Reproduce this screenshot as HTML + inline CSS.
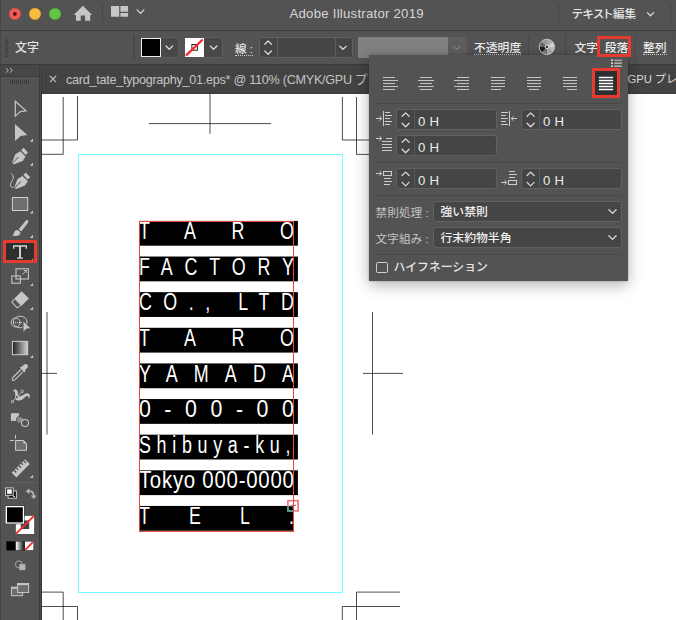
<!DOCTYPE html>
<html lang="ja">
<head>
<meta charset="utf-8">
<title>Adobe Illustrator 2019</title>
<style>
*{margin:0;padding:0;box-sizing:border-box}
html,body{width:676px;height:620px;overflow:hidden;background:#fff}
body{position:relative;font-family:"Liberation Sans","Noto Sans CJK JP",sans-serif;color:#dcdcdc;-webkit-font-smoothing:antialiased}
.abs{position:absolute}
.t{position:absolute;white-space:nowrap;line-height:1}
#titlebar{left:0;top:0;width:676px;height:31px;background:#535353;border-bottom:1px solid #3a3a3a;border-left:1px solid #464646}
#ctrl{left:0;top:31px;width:676px;height:32.5px;background:#535353;border-left:1px solid #464646}
#tabbar{left:0;top:63.5px;width:676px;height:30.5px;background:#3a3a3a}
#tab{left:41.7px;top:64.8px;width:635px;height:27.8px;background:#434343}
#tools{left:0;top:64.8px;width:42px;height:556px;background:#535353;border-left:1px solid #444;border-right:3px solid #3a3a3a}
#toolhead{left:1px;top:64.8px;width:38.2px;height:12.2px;background:#474747;border-bottom:1px solid #3c3c3c}
.fld{position:absolute;background:#454545;border:1px solid #616161;border-radius:3px}
.sep{position:absolute;height:1px;background:#494949}
.vsep{position:absolute;width:1px;background:#474747}
.ul{border-bottom:1px dotted #cfcfcf}
#panel{left:369px;top:55px;width:259px;height:226px;background:#535353;box-shadow:0 4px 14px rgba(0,0,0,.3),0 0 2px rgba(0,0,0,.25)}
.lab{color:#c4c4c4;font-size:11.7px}
.val{color:#f0f0f0;font-size:11.85px;font-weight:500}
.num{color:#ececec;font-size:13.2px;letter-spacing:.2px}
</style>
</head>
<body>
<!-- canvas art -->
<svg class="abs" style="left:0;top:0" width="676" height="620" viewBox="0 0 676 620">
  <g fill="none" stroke="#000" stroke-width=".7">
    <!-- top-left crop -->
    <path d="M63.2 97V154.300H42M77.500 96V140H42"/>
    <!-- top centre -->
    <path d="M149 123.600H271M210 93V133.800"/>
    <!-- top-right crop -->
    <path d="M342.400 97V140H400M356.500 97V154.400H400"/>
    <!-- left centre -->
    <path d="M47 312V434.500M42 373.400H57"/>
    <!-- right centre -->
    <path d="M372.500 312V434.500M363 373.400H403"/>
    <!-- bottom-left crop -->
    <path d="M42 592.100H63.200V620M42 606.500H77.500V620"/>
    <!-- bottom-right crop -->
    <path d="M400 592.100H356.500V620M400 606.500H342.300V620"/>
  </g>
  <rect x="78.500" y="154.500" width="264" height="438" fill="none" stroke="#7ff" stroke-width="1" shape-rendering="crispEdges"/>
  <!-- black bands -->
  <g fill="#000">
    <rect x="139" y="220.90" width="158.9" height="24.800"/>
    <rect x="139" y="256.53" width="158.9" height="24.800"/>
    <rect x="139" y="292.16" width="158.9" height="24.800"/>
    <rect x="139" y="327.79" width="158.9" height="24.800"/>
    <rect x="139" y="363.42" width="158.9" height="24.800"/>
    <rect x="139" y="399.05" width="158.9" height="24.800"/>
    <rect x="139" y="434.68" width="158.9" height="24.800"/>
    <rect x="139" y="470.31" width="158.9" height="24.800"/>
    <rect x="139" y="505.94" width="154.0" height="24.800"/>
  </g>
  <g font-family="'Liberation Sans',sans-serif" font-size="23.200" fill="#fff">
    <text transform="translate(138.900 239.00) scale(0.77 1)" textLength="201.3" lengthAdjust="spacing">TARO</text>
    <text transform="translate(138.900 274.63) scale(0.77 1)" textLength="201.3" lengthAdjust="spacing">FACTORY</text>
    <text transform="translate(138.900 310.26) scale(0.77 1)" textLength="201.3" lengthAdjust="spacing">CO., LTD</text>
    <text transform="translate(138.900 345.89) scale(0.77 1)" textLength="201.3" lengthAdjust="spacing">TARO</text>
    <text transform="translate(138.900 381.52) scale(0.77 1)" textLength="201.3" lengthAdjust="spacing">YAMADA</text>
    <text transform="translate(138.900 417.15) scale(0.92 1)" textLength="168.5" lengthAdjust="spacing">0-00-00</text>
    <text transform="translate(138.900 452.78) scale(0.77 1)" textLength="196.8" lengthAdjust="spacing">Shibuya-ku,</text>
    <text transform="translate(138.900 488.41) scale(0.88 1)" textLength="176.1" lengthAdjust="spacing">Tokyo 000-0000</text>
    <text transform="translate(138.900 524.04) scale(0.77 1)" textLength="201.3" lengthAdjust="spacing">TEL.</text>
  </g>
  <rect x="139.500" y="221.500" width="154" height="310" fill="none" stroke="#e8453c" stroke-width="1" shape-rendering="crispEdges"/>
  <rect x="287.900" y="500.700" width="10.200" height="10.200" fill="none" stroke="#ee7a85" stroke-width="1.700"/>
  <path d="M287.900 506V510.900H293" fill="none" stroke="#3fa393" stroke-width="1.700"/>
  <path d="M290.200 506.400H293V509" fill="none" stroke="#2f8f80" stroke-width=".9"/>
  <path d="M290.500 505.300H296M293.500 502.800V507.800" fill="none" stroke="#ea4a55" stroke-width="1"/>
  <path d="M293.500 494V532" fill="none" stroke="#e8453c" stroke-width="1" shape-rendering="crispEdges"/>
</svg>

<!-- title bar -->
<div id="titlebar" class="abs"></div>
<div id="ctrl" class="abs"></div>
<div id="tabbar" class="abs"></div>
<div id="tab" class="abs"></div>
<div id="tools" class="abs"></div>
<div id="toolhead" class="abs"></div>
<div class="abs" style="left:40.3px;top:64.8px;width:1px;height:556px;background:#484848"></div>

<div class="t" style="left:289.5px;top:7px;font-size:13.2px;letter-spacing:.24px;color:#d6d6d6">Adobe Illustrator 2019</div>
<div class="t" style="left:572px;top:8px;font-size:11.7px;font-feature-settings:'palt';color:#e4e4e4;font-weight:500">テキスト編集</div>
<div class="t" style="left:15px;top:42px;font-size:12px;color:#e0e0e0;font-weight:500">文字</div>
<div class="t ul" style="left:235px;top:42.5px;font-size:11.6px;color:#e2e2e2;padding-bottom:1px;font-weight:500">線 :</div>
<div class="t ul" style="left:474px;top:42.500px;font-size:11.8px;color:#ededed;font-weight:500">不透明度</div>
<div class="t" style="left:574.500px;top:42.500px;font-size:11.8px;color:#ededed;font-weight:500">文字</div>
<div class="t ul" style="left:604.800px;top:42.500px;font-size:11.8px;color:#f4f4f4;font-weight:500">段落</div>
<div class="t ul" style="left:643px;top:42.500px;font-size:11.8px;color:#ededed;font-weight:500">整列</div>
<div class="t" style="left:66px;top:74px;font-size:12.6px;letter-spacing:-.26px;color:#c4c4c4">card_tate_typography_01.eps* @ 110% (CMYK/GPU プレ</div>
<div class="t" style="left:627.600px;top:74.400px;font-size:11.300px;letter-spacing:-.1px;color:#dcdcdc">GPU プレ</div>

<!-- control bar widgets -->
<div class="abs" style="left:5px;top:38px;width:3px;height:20px;background:repeating-linear-gradient(#3e3e3e 0 1px,transparent 1px 2px)"></div>
<div class="vsep" style="left:101.500px;top:3px;height:20px;width:1.5px;background:#464646"></div>
<div class="vsep" style="left:557.500px;top:3.500px;height:19px;width:1.5px;background:#474747"></div>
<div class="vsep" style="left:669.500px;top:3.500px;height:19px;width:1.5px;background:#474747"></div>
<div class="vsep" style="left:133px;top:35px;height:24px;width:1.5px;background:#484848"></div>
<div class="vsep" style="left:527.500px;top:35px;height:24.500px;background:#484848"></div>
<div class="vsep" style="left:565.300px;top:35px;height:24.500px;background:#484848"></div>
<div class="vsep" style="left:634.600px;top:35px;height:24.500px;background:#484848"></div>
<div class="vsep" style="left:673px;top:35px;height:24.500px;background:#484848"></div>

<div class="fld" style="left:158px;top:37px;width:20.500px;height:20.500px;background:#484848;border-color:#5e5e5e;border-radius:0 3px 3px 0"></div>
<div class="abs" style="left:140.500px;top:38px;width:20px;height:19px;background:#000;border:1px solid #ececec"></div>
<div class="fld" style="left:202px;top:37px;width:20.500px;height:20.500px;background:#484848;border-color:#5e5e5e;border-radius:0 3px 3px 0"></div>
<div class="abs" style="left:185px;top:38px;width:19px;height:19px;background:#fff"></div>
<div class="fld" style="left:259px;top:37px;width:94px;height:21px"></div>
<div class="vsep" style="left:277px;top:38px;height:19px;background:#5e5e5e"></div>
<div class="vsep" style="left:335px;top:38px;height:19px;background:#5e5e5e"></div>
<div class="abs" style="left:358px;top:37px;width:90px;height:21px;background:#808080;border-radius:1px 0 0 1px"></div>
<div class="abs" style="left:448px;top:37px;width:18.500px;height:21px;background:#5e5e5e;border-radius:0 3px 3px 0"></div>

<!-- red highlight on 段落 -->

<!-- popup panel -->
<div id="panel" class="abs"></div>
<div class="abs" style="left:597.200px;top:36.200px;width:33.800px;height:20.400px;border:3px solid #e63b30"></div>
<div class="sep" style="left:375px;top:103px;width:247px"></div>
<div class="sep" style="left:375px;top:162px;width:247px"></div>
<div class="sep" style="left:375px;top:195px;width:247px"></div>
<div class="sep" style="left:375px;top:254px;width:247px"></div>

<div class="fld" style="left:396px;top:109px;width:101px;height:21px"></div>
<div class="fld" style="left:521px;top:109px;width:101px;height:21px"></div>
<div class="fld" style="left:396px;top:135px;width:101px;height:21px"></div>
<div class="fld" style="left:396px;top:168px;width:101px;height:21px"></div>
<div class="fld" style="left:521px;top:168px;width:101px;height:21px"></div>
<div class="vsep" style="left:414px;top:110px;height:19px;background:#5a5a5a"></div>
<div class="vsep" style="left:539px;top:110px;height:19px;background:#5a5a5a"></div>
<div class="vsep" style="left:414px;top:136px;height:19px;background:#5a5a5a"></div>
<div class="vsep" style="left:414px;top:169px;height:19px;background:#5a5a5a"></div>
<div class="vsep" style="left:539px;top:169px;height:19px;background:#5a5a5a"></div>
<div class="t num" style="left:418px;top:114.7px">0 H</div>
<div class="t num" style="left:543px;top:114.7px">0 H</div>
<div class="t num" style="left:418px;top:140.7px">0 H</div>
<div class="t num" style="left:418px;top:173.7px">0 H</div>
<div class="t num" style="left:543px;top:173.7px">0 H</div>

<div class="fld" style="left:433px;top:201px;width:189px;height:21px"></div>
<div class="fld" style="left:433px;top:227px;width:189px;height:21px"></div>
<div class="t lab" style="left:375.5px;top:206.5px">禁則処理 :</div>
<div class="t lab" style="left:375.5px;top:232.5px">文字組み :</div>
<div class="t val" style="left:440.5px;top:206.5px">強い禁則</div>
<div class="t val" style="left:440.5px;top:232.5px">行末約物半角</div>
<div class="abs" style="left:376px;top:261.5px;width:11.5px;height:11.5px;border:1px solid #cfcfcf;border-radius:1.5px"></div>
<div class="t val" style="left:393.600px;top:261.500px;color:#e6e6e6">ハイフネーション</div>

<!-- justify-all selected -->
<div class="abs" style="left:592px;top:68px;width:28.100px;height:29.900px;background:#2d3030;border:3.300px solid #e63b30"></div>
<!-- type tool selected -->
<div class="abs" style="left:2.900px;top:240px;width:34.100px;height:23px;background:#2d2f2f;border:3px solid #e63b30"></div>

<!-- icons -->
<svg class="abs" style="left:0;top:0" width="676" height="620" viewBox="0 0 676 620" id="icons">
<!--ICONS-START-->
  <!-- traffic lights -->
  <circle cx="14.900" cy="13.900" r="5.700" fill="#ee5d58" stroke="#dc4640" stroke-width=".6"/><circle cx="14.900" cy="13.900" r="1.900" fill="#4c0b0b"/>
  <circle cx="35" cy="13.900" r="5.700" fill="#f6bc3c" stroke="#e0a42e" stroke-width=".6"/>
  <circle cx="55" cy="13.900" r="5.700" fill="#60c648" stroke="#4cae36" stroke-width=".6"/>
  <!-- home -->
  <path d="M82.900 5.700L73.700 14.900H76V20.800H80.700V15.600H85.100V20.800H90.200V14.900H92.100Z" fill="#c6c6c6"/>
  <!-- layout -->
  <path d="M111 6h8.200v10.800H111zM120.400 6H128.100v5.700h-7.700zM120.400 12.900H128.100V16.800h-7.700z" fill="#c6c6c6"/>
  <g fill="none" stroke="#d8d8d8" stroke-width="1.3" stroke-linecap="round" stroke-linejoin="round">
    <path d="M137.100 9.900l3.400 3.500 3.400-3.500"/>
    <path d="M647.4 12.6l3.100 3.200 3.100-3.200"/>
    <!-- control bar chevrons -->
    <path d="M166 46l3.300 3.300 3.300-3.300"/>
    <path d="M210.300 46l3.300 3.300 3.300-3.300"/>
    <path d="M339.8 46.2l3.2 3 3.2-3"/>
    <path d="M264.800 44.300l3.300-3.300 3.300 3.300M264.800 51l3.300 3.300 3.300-3.300"/>
    <!-- panel steppers -->
    <path d="M402.1 116.3l3.500-3.400 3.500 3.400M402.1 123.2l3.500 3.500 3.500-3.500"/>
    <path d="M527.1 116.3l3.500-3.400 3.500 3.400M527.1 123.2l3.500 3.500 3.500-3.500"/>
    <path d="M402.1 142.3l3.500-3.400 3.500 3.400M402.1 149.2l3.500 3.500 3.500-3.500"/>
    <path d="M402.1 175.5l3.500-3.400 3.500 3.400M402.1 182.4l3.500 3.500 3.500-3.500"/>
    <path d="M527.1 175.5l3.500-3.400 3.500 3.400M527.1 182.4l3.500 3.500 3.500-3.500"/>
    <path d="M608.9 209.8l3.6 3.6 3.6-3.6"/>
    <path d="M608.9 235.8l3.6 3.6 3.6-3.6"/>
  </g>
  <path d="M453.500 46.200l3.300 3.200 3.300-3.200" fill="none" stroke="#7c7c7c" stroke-width="1.3" stroke-linecap="round" stroke-linejoin="round"/>
  <!-- stroke swatch none -->
  <rect x="191.900" y="44.500" width="5.500" height="5.700" fill="none" stroke="#1c1c1c" stroke-width="1"/>
  <path d="M185.900 55.600L202.700 39.500" stroke="#ee2a2e" stroke-width="2.200" fill="none"/>
  <!-- globe/recolor -->
  <path d="M546.9 46.9L546.90 39.30A7.6 7.6 0 0 1 552.27 41.53Z" fill="#a8a8a8"/>
  <path d="M546.9 46.9L552.27 41.53A7.6 7.6 0 0 1 554.50 46.90Z" fill="#d2d2d2"/>
  <path d="M546.9 46.9L554.50 46.90A7.6 7.6 0 0 1 552.27 52.27Z" fill="#b6b6b6"/>
  <path d="M546.9 46.9L552.27 52.27A7.6 7.6 0 0 1 546.90 54.50Z" fill="#a2a2a2"/>
  <path d="M546.9 46.9L546.90 54.50A7.6 7.6 0 0 1 541.53 52.27Z" fill="#707070"/>
  <path d="M546.9 46.9L541.53 52.27A7.6 7.6 0 0 1 539.30 46.90Z" fill="#1c1c1c"/>
  <path d="M546.9 46.9L539.30 46.90A7.6 7.6 0 0 1 541.53 41.53Z" fill="#666"/>
  <path d="M546.9 46.9L541.53 41.53A7.6 7.6 0 0 1 546.90 39.30Z" fill="#989898"/>
  <circle cx="546.9" cy="46.9" r="7.700" fill="none" stroke="#c4c4c4" stroke-width=".9"/>
  <circle cx="546.9" cy="46.9" r="1.800" fill="#3a3a3a" stroke="#e0e0e0" stroke-width="1"/>
  <!-- tab close -->
  <path d="M50 76l6.100 6.100M56.100 76l-6.100 6.100" stroke="#bcbcbc" stroke-width="1.200" fill="none"/>
  <!-- toolbar header -->
  <path d="M6.2 68.2l2 2.2-2 2.2M10.2 68.2l2 2.2-2 2.2" stroke="#c0c0c0" stroke-width="1" fill="none"/>
  <path d="M10.5 80v4M12.5 80v4M14.5 80v4M16.5 80v4M18.5 80v4M20.5 80v4M22.5 80v4M24.5 80v4M26.5 80v4M28.5 80v4" stroke="#3c3c3c" stroke-width="1" fill="none"/>
  <!-- panel menu icon -->
  <path d="M611 60.200h2M611 63.100h2M611 66.100h2" stroke="#d0d0d0" stroke-width="1.800" fill="none"/>
  <path d="M614.200 60.200h7.700M614.200 63.100h7.700M614.200 66.100h7.700" stroke="#d0d0d0" stroke-width="1.100" fill="none"/>
  <!-- alignment icons -->
  <g stroke="#c4c4c4" stroke-width="1" fill="none" shape-rendering="crispEdges">
    <path d="M383 77.500h12M383 80.500h15M383 83.500h12M383 86.500h15M383 89.500h12"/>
    <path d="M420 77.500h12M418 80.500h16M420 83.500h12M418 86.500h16M420 89.500h12"/>
    <path d="M457 77.500h12M454 80.500h15M457 83.500h12M454 86.500h15M457 89.500h12"/>
    <path d="M491 77.500h14M491 80.500h14M491 83.500h14M491 86.500h14M491 89.500h10"/>
    <path d="M527 77.500h14M527 80.500h14M527 83.500h14M527 86.500h14M529 89.500h10"/>
    <path d="M563 77.500h14M563 80.500h14M563 83.500h14M563 86.500h14M567 89.500h10"/>
  </g>
  <path d="M598.900 77.500h14.200M598.900 80.500h14.200M598.900 83.500h14.200M598.900 86.500h14.200M598.900 89.500h14.200" stroke="#fff" stroke-width="1.300" fill="none"/>
  <!-- indent icons -->
  <g stroke="#cdcdcd" stroke-width="1" fill="none">
    <g shape-rendering="crispEdges">
    <path d="M383.5 111v15M385 112.5h5M385 115.5h7M385 118.5h5M385 121.5h7M385 124.5h5"/>
    <path d="M386 138.5h6M382 141.5h10M382 144.5h10M382 147.5h10M382 150.5h10"/>
    <path d="M383.5 171.5h8v4h-8zM383.500 178.5h7M383.5 181.5h8.500M383.5 184.5h6.500"/>
    <path d="M509.5 111v15M501 112.5h7M501 115.5h5M501 118.5h7M501 121.5h5M501 124.5h7"/>
    <path d="M508.500 171.5h6M508.500 174.5h8.500M508.500 177.5h6M508.500 180.5h8v4h-8z"/>
    </g>
    <path d="M376 118.5h5.500M379.500 116.300l2.300 2.200l-2.300 2.200"/>
    <path d="M376 138.500h5.500M379.500 136.300l2.300 2.200l-2.300 2.200"/>
    <path d="M376 173.500h5.500M379.500 171.300l2.300 2.200l-2.300 2.200"/>
    <path d="M517 118.500h-5.500M513.500 116.300l-2.300 2.200l2.300 2.200"/>
    <path d="M501 182.500h5.500M504.500 180.300l2.300 2.200l-2.300 2.200"/>
  </g>
  <!-- TOOLS -->
  <g fill="#c6c6c6" stroke="none">
    <!-- selection (hollow) -->
    <path d="M15.300 101.200L26 110.900L20.300 111.600L15.300 116.200Z" fill="none" stroke="#c6c6c6" stroke-width="1.200" stroke-linejoin="miter"/>
    <!-- direct selection -->
    <path d="M14.900 124L27.400 134.900L20.500 136.100L15.100 141.100Z"/>
    <!-- sub-tool triangles -->
    <path d="M29.800 141.800h3.200v-3.300zM29.800 165.800h3.200v-3.300zM29.800 213.600h3.200v-3.200zM29.800 238h3.200v-3.200zM30 285.900h3v-3zM30 309.900h3.100v-3.100zM30 358h3.100v-3.100zM30 477.900h3.100v-3.100zM31.500 259.800h1.500v-1.500z"/>
    <!-- pen -->
    <g id="pen">
      <path d="M11.900 163L15.300 154.300L20.300 151.300L25.600 156.600L22.700 160.900L14 164.200Z"/>
      <path d="M21.200 150.200L23.600 147.800L28 152.500L25.700 154.900Z"/>
      <path d="M12.300 163.500L17.600 157.800" stroke="#535353" stroke-width="1" fill="none"/>
      <circle cx="17.800" cy="157.600" r=".7" fill="#535353"/>
    </g>
    <!-- curvature -->
    <use href="#pen" x="2.200" y="24.700"/>
    <path d="M11.100 173.200C15 177 13 179.500 11 183C9.500 186 11.500 187.500 13.600 187.600" fill="none" stroke="#c6c6c6" stroke-width="1"/>
    <!-- rectangle -->
    <rect x="12.400" y="197.500" width="15.300" height="13" fill="#6e6e6e" stroke="#cfcfcf" stroke-width="1"/>
    <!-- brush -->
    <path d="M27.900 220.200C28.600 220.900 28.300 222.300 27.500 223.400L21.200 231.400L18.700 229.300L25.300 221.300C26.200 220.200 27.300 219.700 27.900 220.200Z"/>
    <path d="M18 230.200L20.400 232.300C20.600 234.500 18.500 236 16 236C14.500 236 13 235.800 12 235.800C13.600 235 13.700 233.600 14.200 232.300C14.900 230.600 16.600 229.800 18 230.200Z"/>
    <!-- type T -->
    <path d="M13 245.200H27V248.700H25.700V246.800H21V257.600H23V258.800H17V257.600H19.100V246.800H14.300V248.700H13Z" fill="#d6d6d6"/>
    <!-- scale tool -->
    <g fill="none" stroke="#c6c6c6" stroke-width="1.100">
      <rect x="16" y="268.800" width="12.400" height="10.200"/>
      <rect x="11.800" y="275.900" width="8.500" height="7.300"/>
      <path d="M22.200 274.600L26.300 270.600M23.900 270.500H26.400V273" stroke-width=".9"/>
    </g>
    <!-- eraser -->
    <path d="M21.600 291.200L28.900 298.600L21.400 306L14.100 298.700Z"/>
    <path d="M14.100 299.300L12.300 301.300Q11.700 302 12.300 302.600L16.800 307.300Q17.400 307.900 18.100 307.300L20.600 305.100" fill="none" stroke="#c6c6c6" stroke-width="1.100"/>
    <!-- shape builder -->
    <g fill="none" stroke="#c6c6c6" stroke-width="1">
      <circle cx="15.600" cy="322.500" r="4.500"/>
      <ellipse cx="20.200" cy="322" rx="6.800" ry="5.800"/>
      <path d="M12.800 322.500H22.400" stroke="#e0e0e0" stroke-width="1.100" stroke-dasharray="1 1.100"/>
    </g>
    <path d="M23.100 320.800L31 328.600L26.300 329L23.100 332.400Z" stroke="#535353" stroke-width=".8"/>
    <!-- gradient -->
    <rect x="12.400" y="341.400" width="15.300" height="13.300" fill="url(#gr)" stroke="#cfcfcf" stroke-width="1"/>
    <!-- eyedropper -->
    <path d="M27.300 364.700C28.300 365.700 28.100 367.200 27.200 368.100L25 370.300L25.600 370.900L24.300 372.200L19.800 367.700L21.100 366.400L21.700 367L23.900 364.800C24.800 363.900 26.300 363.700 27.300 364.700Z"/>
    <path d="M20.900 369.500L12.900 377.500Q11.600 379 12.600 380Q13.600 381 15.100 379.700L23.100 371.700" fill="none" stroke="#c6c6c6" stroke-width="1.100"/>
    <!-- puppet warp -->
    <path d="M13 391.800C13.200 389.600 15.300 388.600 16.500 389.800C18 391.300 18.400 393.500 17.700 395.600C19.500 396.800 22.300 395.800 24.300 394.300C26.300 392.800 28.600 392.600 29.500 394.500C30.200 396 29.700 397.800 28.800 398.900C28.900 397.300 28.400 396.100 27.300 396.100C25.800 396.100 24.800 397.900 22.800 399.300C20.600 400.800 17.600 400.900 15.500 400.100C17.100 398.700 16.300 397.200 15.600 396C14.700 394.400 15.500 392.500 14.700 391.500C14.200 390.900 13.400 391.100 13 391.800Z"/>
    <g stroke="#c6c6c6" stroke-width=".9" fill="#535353">
      <path d="M12.400 401.600L22.200 391.400" fill="none"/>
      <circle cx="12.400" cy="401.600" r="1.200"/>
      <circle cx="22.200" cy="391.400" r="1.200"/>
      <circle cx="16.900" cy="397" r="1.500"/>
    </g>
    <!-- blend -->
    <rect x="10.900" y="413.200" width="8" height="7.700"/>
    <path d="M18 416.800H21.500Q23.500 417.300 23.500 419.500V420.500Q23.500 423 20.500 423H18.500Q16.400 422.500 16.400 420Q16.400 417.300 18 416.800Z" fill="#8a8a8a" stroke="#535353" stroke-width=".9"/>
    <circle cx="25" cy="423" r="3.500" fill="#535353" stroke="#c6c6c6" stroke-width="1.100"/>
    <!-- artboard -->
    <path d="M15.500 434.900V438.800M9.900 440.500H14.100" stroke="#c6c6c6" stroke-width="1" fill="none"/>
    <path d="M15.600 440.500H23.400L26.500 443.600V450.300H15.600Z" fill="#6e6e6e" stroke="#cfcfcf" stroke-width="1"/>
    <path d="M23.400 440.500V443.600H26.500Z" fill="#cfcfcf"/>
    <!-- ruler -->
    <g transform="rotate(-45 20 467.800)">
      <rect x="10.600" y="465.400" width="19" height="6.600"/>
      <path d="M14 465.400v3.200M17.400 465.400v2.400M20.800 465.400v3.200M24.200 465.400v2.400M27.600 465.400v3.200" stroke="#535353" stroke-width="1.400"/>
    </g>
  </g>
  <defs>
    <linearGradient id="gr" x1="0" x2="1" y1="0" y2="0"><stop offset="0" stop-color="#1e1e1e"/><stop offset="1" stop-color="#d4d4d4"/></linearGradient>
    <linearGradient id="gr2" x1="0" x2="1" y1="0" y2="0"><stop offset="0" stop-color="#fff"/><stop offset="1" stop-color="#111"/></linearGradient>
  </defs>
  <!-- toolbar divider -->
  <path d="M5 482.500H35" stroke="#626262" stroke-width="1" fill="none"/>
  <!-- default fill/stroke -->
  <rect x="8.100" y="490.900" width="8.300" height="7.300" fill="#111" stroke="#d0d0d0" stroke-width="1"/>
  <rect x="13" y="496" width="2" height="1" fill="#d0d0d0"/>
  <rect x="5.600" y="487.900" width="7.700" height="7.400" fill="#1a1a1a" stroke="#d0d0d0" stroke-width="1"/>
  <rect x="7.100" y="489.300" width="4.700" height="4.500" fill="#fff"/>
  <!-- swap arrow -->
  <path d="M28.500 491.200C32 490.800 33.800 492.600 33.700 496.300" fill="none" stroke="#b4b4b4" stroke-width="1.700"/>
  <path d="M25.800 491.300L29.300 488.300V494.300ZM30.700 495.600H36.700L33.700 499Z" fill="#b4b4b4"/>
  <!-- stroke swatch -->
  <rect x="15.300" y="515.300" width="19.400" height="19.200" fill="#fff" stroke="#3c3c3c" stroke-width=".8"/>
  <rect x="20.800" y="520.400" width="8.400" height="8.600" fill="#444"/>
  <path d="M15.900 533.900L34.100 515.900" stroke="#f0302f" stroke-width="2" fill="none"/>
  <!-- fill swatch -->
  <rect x="5" y="505.400" width="19.600" height="18.800" fill="#3c3c3c"/>
  <rect x="5.600" y="506" width="18.400" height="17.600" fill="#fff"/>
  <rect x="7" y="507.300" width="15.800" height="15.100" fill="#000"/>
  <!-- colour mode row -->
  <rect x="6" y="541" width="28" height="9.800" fill="#333"/>
  <rect x="6.600" y="541.600" width="8.600" height="8.600" fill="#000"/>
  <rect x="15.900" y="541.600" width="8.400" height="8.600" fill="url(#gr2)"/>
  <rect x="25" y="541.600" width="8.400" height="8.600" fill="#fff"/>
  <path d="M25.300 549.900L33.100 541.900" stroke="#f0302f" stroke-width="1.800" fill="none"/>
  <!-- draw mode -->
  <circle cx="18.900" cy="564.400" r="3.500" fill="none" stroke="#a8a8a8" stroke-width="1"/>
  <rect x="19.300" y="564.100" width="6.100" height="6.100" fill="#b4b4b4"/>
  <!-- screen mode -->
  <rect x="11.400" y="587.200" width="11.200" height="8.500" fill="#6e6e6e" stroke="#c6c6c6" stroke-width="1"/>
  <path d="M11.400 588H22.600" stroke="#c6c6c6" stroke-width="1.600"/>
  <rect x="17.600" y="583.500" width="11" height="9" fill="#6e6e6e" stroke="#c6c6c6" stroke-width="1"/>
  <path d="M17.600 584.300H28.600" stroke="#c6c6c6" stroke-width="1.600"/>
<!--ICONS-END-->
</svg>
</body>
</html>
